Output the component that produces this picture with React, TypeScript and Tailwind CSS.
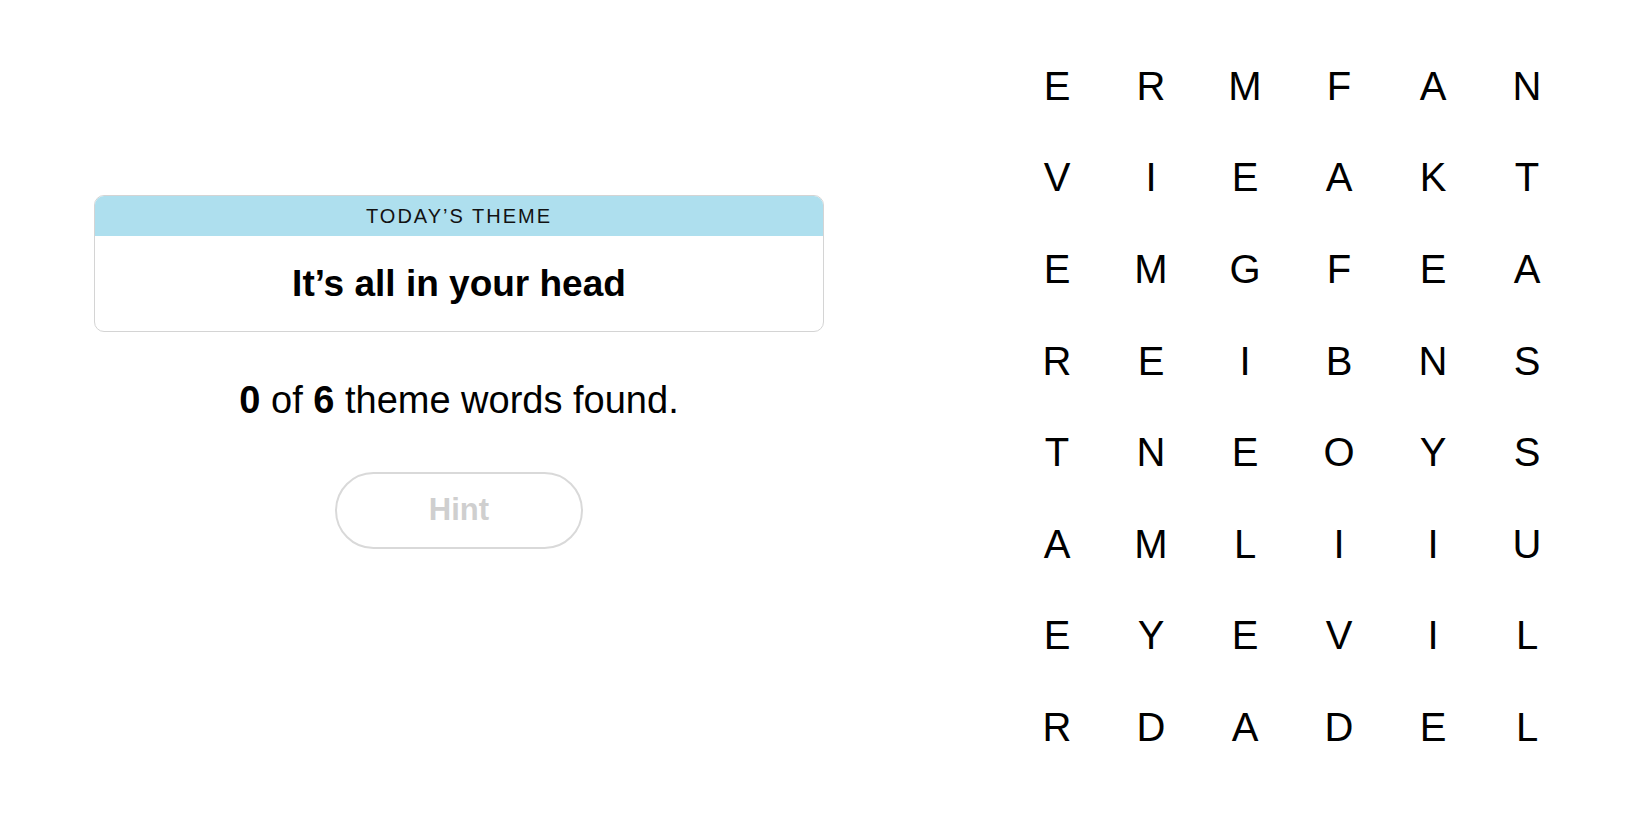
import React from 'react';

const rows: string[] = [
  'ERMFAN',
  'VIEAKT',
  'EMGFEA',
  'REIBNS',
  'TNEOYS',
  'AMLIIU',
  'EYEVIL',
  'RDADEL',
];

const font = { fontFamily: "'Liberation Sans', Arial, sans-serif" };

const App: React.FC = () => {
  return (
    <div className="w-[1650px] h-[825px] bg-white flex items-start text-black" style={font}>
      <div className="w-[730px] ml-[94px] mt-[195px] flex flex-col items-center">
        <div className="w-full rounded-[10px] border border-[#d4d4d4] overflow-hidden">
          <div className="h-[40px] bg-[#aedfee] flex items-center justify-center text-[20px] tracking-[0.1em] uppercase text-[#121212]">
            Today’s Theme
          </div>
          <div className="h-[95px] flex items-center justify-center text-[37px] font-bold">
            It’s all in your head
          </div>
        </div>
        <p className="mt-[46px] text-[38px] leading-[44px]">
          <span className="font-bold">0</span> of <span className="font-bold">6</span> theme words found.
        </p>
        <button className="mt-[50px] w-[248px] h-[77px] rounded-full border-2 border-[#d9d9d9] text-[#cfcfcf] font-bold text-[31px]">
          Hint
        </button>
      </div>
      <div className="ml-[186px] mt-[40px] w-[564px] grid grid-cols-6 content-start">
        {rows.map((row, r) =>
          row.split('').map((ch, c) => (
            <div key={`${r}-${c}`} className="h-[91.6px] flex items-center justify-center text-[40px]">
              {ch}
            </div>
          ))
        )}
      </div>
    </div>
  );
};

export default App;
